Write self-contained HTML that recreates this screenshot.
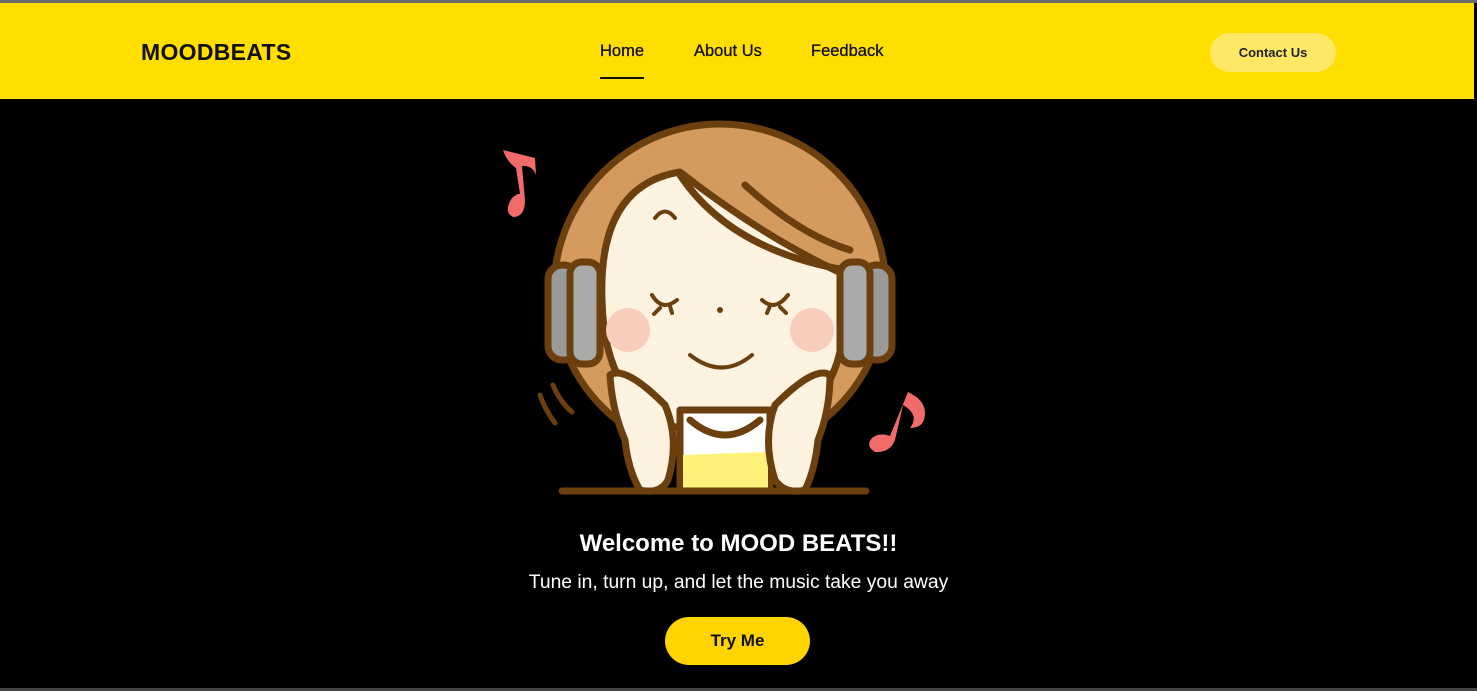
<!DOCTYPE html>
<html><head><meta charset="utf-8"><style>
*{margin:0;padding:0;box-sizing:border-box}
body{width:1477px;height:691px;background:#000;overflow:hidden;font-family:"Liberation Sans",sans-serif;position:relative}
.top{position:absolute;left:0;top:0;width:1477px;height:3px;background:#6b6b6b}
header{position:absolute;left:0;top:3px;width:1474px;height:96px;background:#ffde00}
.logo{position:absolute;left:141px;top:36px;font-size:23px;font-weight:bold;color:#111;letter-spacing:0.3px}
nav a{position:absolute;top:39px;font-size:16.5px;color:#111;text-decoration:none;-webkit-text-stroke:0.3px #111}
.home:after{content:"";position:absolute;left:0;right:0;top:35px;height:2px;background:#111}
.cbtn{position:absolute;left:1210px;top:30px;width:126px;height:39px;border-radius:20px;background:#ffe865;font-size:13px;font-weight:bold;color:#222;text-align:center;line-height:39px}
.h1{position:absolute;left:0;width:1477px;top:530px;text-align:center;color:#fff;font-size:24px;font-weight:bold}
.p{position:absolute;left:0;width:1477px;top:572px;text-align:center;color:#fff;font-size:19.3px}
.try{position:absolute;left:665px;top:617px;width:145px;height:48px;border-radius:24px;background:#ffd400;color:#111;font-weight:bold;font-size:17px;text-align:center;line-height:48px}
.bot{position:absolute;left:0;top:688px;width:1477px;height:3px;background:#444}
</style></head><body>
<div class="top"></div>
<header>
<div class="logo">MOODBEATS</div>
<nav><a class="home" style="left:600px">Home</a><a style="left:694px">About Us</a><a style="left:811px">Feedback</a></nav>
<div class="cbtn">Contact Us</div>
</header>
<svg width="1477" height="691" style="position:absolute;left:0;top:0" viewBox="0 0 1477 691">
<g stroke="#6b3f0e" stroke-width="7" stroke-linecap="round" stroke-linejoin="round">
<circle cx="720" cy="290" r="166" fill="#d49a5e"/>
<path d="M602 300 Q598 185 680 172 Q760 235 845 275 L842 340 Q830 430 720 435 Q605 430 602 300 Z" fill="#fdf3e0"/>
<path d="M680 175 Q730 250 845 270" fill="none"/>
<path d="M745 185 Q800 235 850 250" fill="none"/>
<path d="M680 410 L680 490 L770 490 L770 410 Z" fill="#fff"/>
<path d="M683 455 L768 452 L768 488 L683 488 Z" fill="#fff27a" stroke="none"/>
<path d="M690 420 Q725 450 760 420" fill="none"/>
<path d="M610 375 Q625 365 665 405 Q680 440 668 480 Q660 495 640 490 Q628 470 625 440 Q612 410 610 375 Z" fill="#fdf3e0"/>
<path d="M830 375 Q815 365 775 405 Q762 440 775 480 Q785 495 805 490 Q815 470 818 440 Q830 410 830 375 Z" fill="#fdf3e0"/>
<rect x="548" y="265" width="30" height="95" rx="14" fill="#9a9a9a"/>
<rect x="570" y="262" width="30" height="102" rx="12" fill="#aaa"/>
<rect x="862" y="265" width="30" height="95" rx="14" fill="#9a9a9a"/>
<rect x="840" y="262" width="30" height="102" rx="12" fill="#aaa"/>
<path d="M562 491 L866 491" fill="none"/>
<path d="M540 395 Q545 410 555 423 M553 385 Q560 402 572 412" fill="none" stroke-width="5"/>
<g stroke-width="4" fill="none"><path d="M655 218 Q665 205 675 218"/><path d="M652 295 Q662 312 677 300 M660 308 L654 314 M670 306 L672 313"/><path d="M762 300 Q775 312 788 295 M770 306 L767 313 M780 307 L786 313"/><path d="M690 355 Q722 380 752 355"/></g>
<circle cx="720" cy="310" r="3" fill="#6b3f0e" stroke="none"/>
</g>
<circle cx="628" cy="330" r="22" fill="#f8cdbb"/>
<circle cx="812" cy="330" r="22" fill="#f8cdbb"/>
<g fill="#f26b6b"><path d="M503 150 L535 158 L536 175 Q532 165 522 166 L525 200 Q525 217 513 217 Q503 212 512 198 Q518 193 520 194 L516 168 Q507 162 503 150 Z"/>
<path d="M908 392 Q925 400 925 413 Q925 428 910 428 Q920 415 903 405 L895 440 Q890 453 875 452 Q865 446 872 438 Q880 432 890 436 Z"/></g>
</svg>
<div class="h1">Welcome to MOOD BEATS!!</div>
<div class="p">Tune in, turn up, and let the music take you away</div>
<div class="try">Try Me</div>
<div class="bot"></div>
</body></html>
